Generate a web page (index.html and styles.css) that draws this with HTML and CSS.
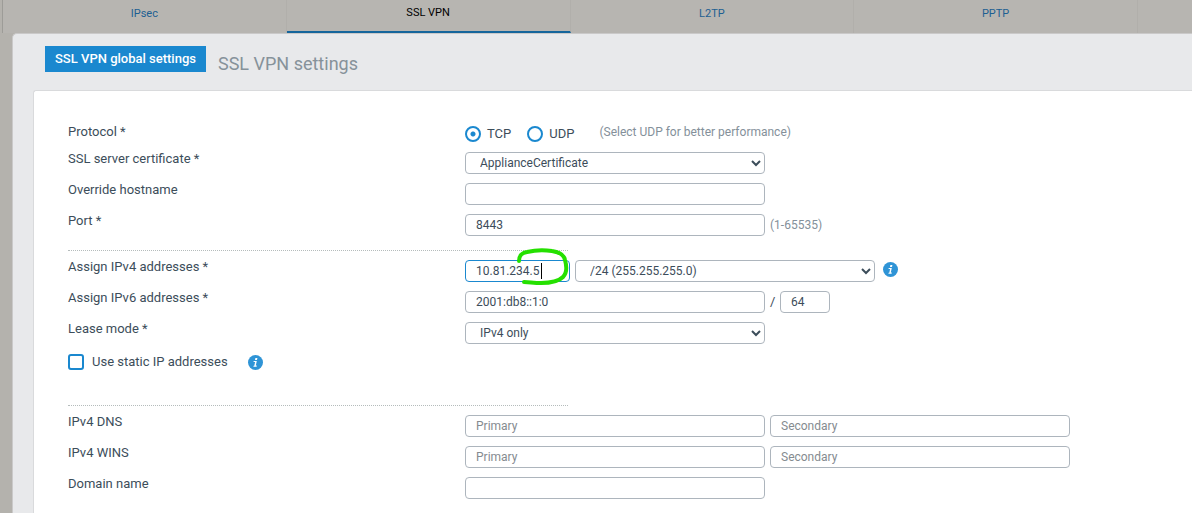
FILE: index.html
```
<!DOCTYPE html>
<html lang="en">
<head>
<meta charset="utf-8">
<title>SSL VPN settings</title>
<link rel="stylesheet" href="styles.css">
</head>
<body>
<nav class="tabs">
  <a class="tab" href="#ipsec">IPsec</a>
  <a class="tab tab-active" href="#sslvpn">SSL VPN</a>
  <a class="tab" href="#l2tp">L2TP</a>
  <a class="tab" href="#pptp">PPTP</a>
</nav>
<main class="panel">
  <header class="head">
    <button class="primary" type="button">SSL VPN global settings</button>
    <h1 class="title">SSL VPN settings</h1>
  </header>
  <form class="card">
    <div class="row row-short">
      <span class="label" id="protocol">Protocol *</span>
      <div class="radios" role="radiogroup" aria-labelledby="protocol">
        <label class="choice"><input class="radio" type="radio" name="protocol" checked>TCP</label>
        <label class="choice"><input class="radio" type="radio" name="protocol">UDP</label>
        <span class="hint">(Select UDP for better performance)</span>
      </div>
    </div>
    <div class="row">
      <label class="label" for="cert">SSL server certificate *</label>
      <select class="field select" id="cert"><option>ApplianceCertificate</option></select>
    </div>
    <div class="row">
      <label class="label" for="host">Override hostname</label>
      <input class="field" id="host" type="text">
    </div>
    <div class="row">
      <label class="label" for="port">Port *</label>
      <div class="controls"><input class="field" id="port" type="text" value="8443"><span class="hint">(1-65535)</span></div>
    </div>
    <hr class="rule">
    <div class="row">
      <label class="label" for="ipv4">Assign IPv4 addresses *</label>
      <div class="controls">
        <div class="marked">
          <input class="field field-address" id="ipv4" type="text" value="10.81.234.5">
          <span class="caret"></span>
          <svg class="mark" width="56" height="40" viewBox="0 0 56 40" aria-hidden="true"><path d="M4 14 C4 8 7 6 12 5 C20 3 31 3 37 4 C44 5 49 8 50 13 C52 20 52 26 48 30 C43 35 34 36 26 36 C19 36 14 35 9 35"/></svg>
        </div>
        <select class="field select" aria-label="IPv4 netmask"><option>/24 (255.255.255.0)</option></select>
        <svg class="info" viewBox="0 0 15 15" role="img" aria-label="Information"><circle cx="7.5" cy="7.5" r="7.5"/><path d="M7.4 3h2L9 4.900H7zM5.700 5.900h3.100L7.800 10.600h1l-.2 1.200H5.400l.2-1h.7l.8-3.800H5.500z"/></svg>
      </div>
    </div>
    <div class="row">
      <label class="label" for="ipv6">Assign IPv6 addresses *</label>
      <div class="controls"><input class="field" id="ipv6" type="text" value="2001:db8::1:0"><span class="slash">/</span><input class="field field-prefix" type="text" value="64" aria-label="IPv6 prefix length"></div>
    </div>
    <div class="row">
      <label class="label" for="lease">Lease mode *</label>
      <select class="field select" id="lease"><option>IPv4 only</option></select>
    </div>
    <div class="row row-static">
      <label class="static"><input class="check" type="checkbox">Use static IP addresses</label>
      <svg class="info" viewBox="0 0 15 15" role="img" aria-label="Information"><circle cx="7.5" cy="7.5" r="7.5"/><path d="M7.4 3h2L9 4.900H7zM5.700 5.900h3.100L7.800 10.600h1l-.2 1.200H5.400l.2-1h.7l.8-3.800H5.500z"/></svg>
    </div>
    <hr class="rule">
    <div class="row">
      <label class="label" for="dns">IPv4 DNS</label>
      <div class="controls"><input class="field" id="dns" type="text" placeholder="Primary"><input class="field" type="text" placeholder="Secondary" aria-label="Secondary IPv4 DNS"></div>
    </div>
    <div class="row">
      <label class="label" for="wins">IPv4 WINS</label>
      <div class="controls"><input class="field" id="wins" type="text" placeholder="Primary"><input class="field" type="text" placeholder="Secondary" aria-label="Secondary IPv4 WINS"></div>
    </div>
    <div class="row">
      <label class="label" for="domain">Domain name</label>
      <input class="field" id="domain" type="text">
    </div>
  </form>
</main>
</body>
</html>
```
FILE: styles.css
```
* { box-sizing: border-box; }
body {
  margin: 0;
  min-height: 100vh;
  display: flex;
  flex-direction: column;
  overflow-x: hidden;
  background: #b4b2ad;
  color: #3c4d5a;
  font: 13px/14px Roboto, "Liberation Sans", sans-serif;
}
.tabs {
  display: grid;
  grid-template-columns: repeat(4, 1fr);
  height: 33px;
  margin-left: 2px;
  padding-right: 54px;
  border-left: 1px solid #9d9c98;
  background: #b7b5b1;
}
.tab {
  padding-top: 7px;
  border-right: 1px solid #b1afab;
  color: #1d5f92;
  font-size: 11px;
  text-align: center;
  text-decoration: none;
}
.tab-active {
  padding-top: 6px;
  border-bottom: 2px solid #15659b;
  color: #000;
}
.panel {
  flex: 1;
  display: flex;
  flex-direction: column;
  margin-left: 12px;
  padding-left: 20px;
  border: 1px solid #cac9c9;
  border-width: 1px 0 0 1px;
  border-radius: 5px 0 0 0;
  background: #e8e9eb;
}
.head {
  display: flex;
  align-items: flex-start;
  gap: 12px;
  padding: 12px 12px 16px;
}
.primary {
  height: 26px;
  padding: 0 10px;
  border: 0;
  background: #1a88cf;
  color: #fff;
  font: 500 13px/26px Roboto, "Liberation Sans", sans-serif;
}
.title {
  margin: 8px 0 0;
  color: #86929a;
  font-size: 18px;
  line-height: 20px;
  font-weight: 400;
}
.card {
  flex: 1;
  padding: 34px 34px 5px;
  border: 1px solid #d9dadc;
  border-width: 1px 0 0 1px;
  border-radius: 3px 0 0 0;
  background: #fff;
}
.row {
  display: flex;
  align-items: flex-start;
  min-height: 22px;
  margin-bottom: 9px;
}
.row-short { min-height: 18px; }
.row-static { min-height: 38px; gap: 20px; }
.label { flex: none; width: 397px; }
.radios, .controls { display: flex; align-items: center; }
.controls { gap: 5px; }
.radios { height: 17px; }
.choice {
  display: flex;
  align-items: center;
  gap: 6px;
  margin-right: 16px;
}
.hint { color: #84909a; font-size: 12px; }
.radios .hint { margin: 0 0 4px 9px; }
.radio, .check {
  appearance: none;
  flex: none;
  width: 16px;
  height: 16px;
  margin: 0;
  border: 2px solid #1a88cf;
  border-radius: 50%;
  background: #fff;
}
.radio:checked { background: radial-gradient(circle, #1a88cf 2px, #fff 3px); }
.check { border-radius: 3px; }
.static {
  display: flex;
  align-items: center;
  gap: 8px;
  height: 18px;
}
.field {
  flex: none;
  width: 300px;
  height: 22px;
  margin: 0;
  padding: 0 10px;
  border: 1px solid #adb5bd;
  border-radius: 4px;
  background: #fff;
  color: #3c4d5a;
  font: 12px/20px Roboto, "Liberation Sans", sans-serif;
}
.field::placeholder { color: #858b90; }
.select { padding: 0 1px 0 10px; }
.field-address { width: 105px; border-color: #1a88cf; }
.field-prefix { width: 50px; }
.slash { width: 5px; }
.info {
  flex: none;
  width: 15px;
  height: 15px;
  margin-top: 2px;
  fill: #2f94d6;
}
.info path { fill: #fff; }
.controls .info { margin: 0 0 3px 3px; }
.marked { position: relative; display: flex; }
.caret {
  position: absolute;
  left: 76px;
  top: 3px;
  width: 1px;
  height: 16px;
  background: #000;
}
.mark {
  position: absolute;
  left: 50px;
  top: -13px;
  z-index: 1;
  fill: none;
  stroke: #25e000;
  stroke-width: 4;
  stroke-linecap: round;
  pointer-events: none;
}
.rule {
  width: 500px;
  height: 0;
  margin: 14px 0 9px;
  border: 0;
  border-top: 1px dotted #b5bcbc;
}
```
